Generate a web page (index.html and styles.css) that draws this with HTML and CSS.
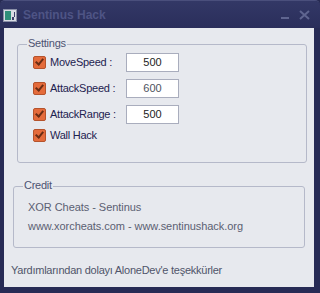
FILE: index.html
```html
<!DOCTYPE html>
<html>
  <head>
    <title>Sentinus Hack</title>
    <link rel="stylesheet" href="styles.css">
  </head>
  <body>
    <div class="window">
      <div class="titlebar">
        <svg class="app_icon" width="14" height="13" viewBox="0 0 14 13">
          <rect x="0.5" y="0.5" width="13" height="12" fill="#d8dce4" stroke="#8a90a8"/>
          <rect x="2" y="2" width="6" height="9" fill="#2f8f7a"/>
          <rect x="9" y="8" width="2" height="3" fill="#3a3f6a"/>
          <rect x="11" y="3" width="1" height="5" fill="#3a3f6a"/>
        </svg>
        <span class="title">Sentinus Hack</span>
        <svg class="title_btn min" width="9" height="10" viewBox="0 0 9 10">
          <rect x="0" y="7" width="8" height="2" fill="#5f6590"/>
        </svg>
        <svg class="title_btn close" width="11" height="10" viewBox="0 0 11 10">
          <path d="M1 1 L10 9 M10 1 L1 9" stroke="#5f6590" stroke-width="2"/>
        </svg>
      </div>
      <div class="client">
        <fieldset class="group settings">
          <legend>Settings</legend>
          <div class="group_body">
            <div class="row">
              <span class="check"></span>
              <span class="label">MoveSpeed :</span>
              <input class="num" type="text" value="500">
            </div>
            <div class="row">
              <span class="check"></span>
              <span class="label">AttackSpeed :</span>
              <input class="num dim" type="text" value="600">
            </div>
            <div class="row">
              <span class="check"></span>
              <span class="label">AttackRange :</span>
              <input class="num" type="text" value="500">
            </div>
            <div class="row short">
              <span class="check"></span>
              <span class="label">Wall Hack</span>
            </div>
          </div>
        </fieldset>
        <fieldset class="group credit">
          <legend>Credit</legend>
          <div class="group_body">
            <p>XOR Cheats - Sentinus</p>
            <p>www.xorcheats.com - www.sentinushack.org</p>
          </div>
        </fieldset>
        <p class="thanks">Yardımlarından dolayı AloneDev'e teşekkürler</p>
      </div>
    </div>
  </body>
</html>
```

FILE: styles.css
```css
body {
  margin: 0;
  background: #262a52;
  font-family: "Liberation Sans", Arial, sans-serif;
  font-size: 11px;
  letter-spacing: -0.25px;
}

.window {
  width: 320px;
  height: 293px;
  box-sizing: border-box;
  background: #272b55;
  border-top: 1px solid #4a4f7c;
  border-radius: 5px 5px 0 0;
}

.titlebar {
  height: 27px;
  display: flex;
  align-items: center;
  background: linear-gradient(#333866, #2a2e5b);
  border-radius: 5px 5px 0 0;
  padding: 0 10px 0 3px;
}

.app_icon {
  margin-top: 2px;
}

.title {
  margin-left: 6px;
  margin-top: 1px;
  font-weight: bold;
  font-size: 12px;
  letter-spacing: 0;
  color: #4e5485;
}

.min {
  margin-left: auto;
  margin-top: 1px;
}

.close {
  margin-left: 9px;
  margin-top: 1px;
}

.client {
  margin: 0 6px 0 4px;
  height: 259px;
  background: #e7e9ee;
  padding-top: 8px;
  box-sizing: border-box;
}

.group {
  margin: 0;
  padding: 0;
  border: 1px solid #b5b9c9;
  border-radius: 3px;
}

.group legend {
  margin-left: 9px;
  padding: 0 1px 3px;
  line-height: 14px;
  color: #4d5372;
}

.settings {
  margin-left: 13px;
  width: 288px;
}

.settings .group_body {
  margin-top: -4px;
  padding: 0 0 19px 15px;
}

.row {
  display: flex;
  align-items: center;
  height: 26px;
}

.row.short {
  height: 16px;
}

.check {
  width: 11px;
  height: 11px;
  border: 1px solid #b5532c;
  border-radius: 2px;
  background: #e46b3b;
  position: relative;
}

.check::after {
  content: "";
  position: absolute;
  left: 3px;
  top: 0px;
  width: 3px;
  height: 6px;
  border: solid #6a2d14;
  border-width: 0 2px 2px 0;
  transform: rotate(40deg);
}

.label {
  margin-left: 4px;
  width: 76px;
  color: #1e2250;
}

.num {
  width: 53px;
  height: 19px;
  box-sizing: border-box;
  border: 1px solid #a9adbd;
  background: #fff;
  font-family: inherit;
  font-size: 11px;
  text-align: center;
  color: #222;
  padding: 0;
}

.num.dim {
  color: #4e535e;
}

.credit {
  margin: 15px 0 0 9px;
  width: 290px;
}

.credit .group_body {
  padding: 3px 0 11px 14px;
}

.credit p {
  margin: 0;
  line-height: 19px;
  letter-spacing: -0.05px;
  color: #5b6072;
}

.thanks {
  margin: 16px 0 0 7px;
  color: #50556a;
}
```
